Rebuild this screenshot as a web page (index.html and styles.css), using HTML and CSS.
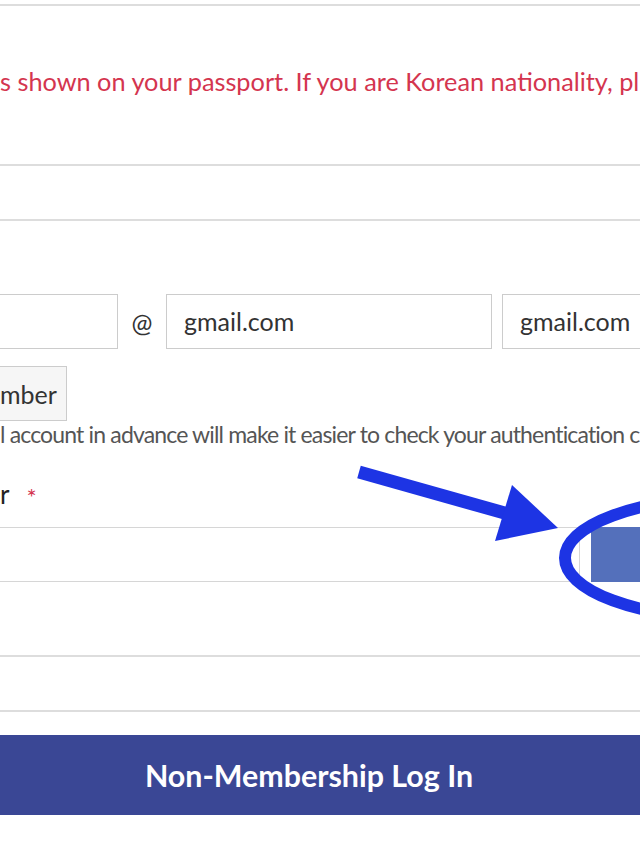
FILE: index.html
```html
<!DOCTYPE html>
<html lang="en">
<head>
<meta charset="utf-8">
<title>Non-Membership Log In</title>
<link rel="stylesheet" href="styles.css">
</head>
<body>
<div class="page">
  <section class="row note">
    <p class="warn">s shown on your passport. If you are Korean nationality, pl</p>
  </section>
  <section class="row blank"></section>
  <section class="email">
    <div class="email-fields">
      <div class="box local"></div>
      <span class="at">@</span>
      <div class="box domain">gmail.com</div>
      <div class="box select">gmail.com</div>
    </div>
    <button class="check" type="button">mber</button>
    <p class="help">l account in advance will make it easier to check your authentication c</p>
  </section>
  <section class="phone">
    <div class="label">r <span class="req">*</span></div>
    <div class="phone-row">
      <div class="box phone-input"></div>
      <button class="send" type="button"></button>
    </div>
  </section>
  <section class="row blank boxed"></section>
  <button class="submit" type="button">Non-Membership Log In</button>

  <svg class="markup" width="640" height="853" viewBox="0 0 640 853" aria-hidden="true">
    <line x1="359" y1="472" x2="515" y2="516" stroke="#1d34e4" stroke-width="13"/>
    <polygon points="512,485 495,541 558,528" fill="#1d34e4"/>
    <ellipse cx="728" cy="558" rx="163" ry="60" fill="none" stroke="#1d34e4" stroke-width="12"/>
  </svg>
</div>
</body>
</html>
```

FILE: styles.css
```css
html, body {
  margin: 0;
  padding: 0;
  background: #ffffff;
}

.page {
  position: relative;
  width: 640px;
  height: 853px;
  overflow: hidden;
  padding-top: 4px;
  box-sizing: border-box;
  font-family: "Lato", "Noto Sans", sans-serif;
  color: #333333;
}

.row {
  border-bottom: 2px solid #dddddd;
}

.note {
  border-top: 2px solid #dddddd;
  height: 158px;
}

.warn {
  margin: 0;
  padding-top: 60px;
  line-height: 30px;
  font-size: 25.3px;
  color: #d4354f;
  white-space: nowrap;
}

.blank {
  height: 53px;
}

.boxed {
  margin-top: 73px;
  border-top: 2px solid #dddddd;
}

.email {
  padding-top: 73px;
}

.email-fields {
  display: flex;
  align-items: center;
  height: 55px;
}

.box {
  flex: 0 0 auto;
  box-sizing: border-box;
  height: 55px;
  border: 1px solid #cccccc;
  background: #ffffff;
  font-size: 25px;
  line-height: 53px;
  color: #333333;
  white-space: nowrap;
}

.local {
  width: 118px;
  border-left: 0;
}

.at {
  flex: 0 0 auto;
  width: 48px;
  text-align: center;
  font-size: 25px;
  color: #333333;
}

.domain {
  width: 326px;
  padding-left: 17px;
}

.select {
  width: 170px;
  margin-left: 10px;
  padding-left: 17px;
}

.check {
  display: block;
  margin-top: 17px;
  width: 67px;
  height: 55px;
  box-sizing: border-box;
  border: 1px solid #cccccc;
  border-left: 0;
  background: #f6f6f6;
  font-family: inherit;
  font-size: 25px;
  color: #333333;
  text-align: right;
  padding: 0 19px 0 0;
}

.help {
  margin: 0;
  font-size: 23px;
  line-height: 26px;
  letter-spacing: -0.84px;
  color: #555555;
  white-space: nowrap;
}

.phone {
  padding-top: 32px;
}

.label {
  font-size: 26px;
  line-height: 30px;
  color: #222222;
}

.req {
  color: #d4354f;
  font-size: 24px;
  margin-left: 11px;
  vertical-align: middle;
}

.phone-row {
  display: flex;
  margin-top: 15px;
}

.phone-input {
  width: 580px;
  border-left: 0;
  border-color: #d6d6d6;
}

.send {
  flex: 0 0 auto;
  width: 80px;
  height: 55px;
  margin-left: 11px;
  border: 0;
  background: #5470bb;
}

.submit {
  display: block;
  width: 100%;
  height: 80px;
  margin-top: 23px;
  border: 0;
  background: #3a4795;
  color: #ffffff;
  font-family: inherit;
  font-weight: 700;
  font-size: 30.4px;
  padding: 0 22px 0 0;
}

.markup {
  position: absolute;
  left: 0;
  top: 0;
  pointer-events: none;
}
```
